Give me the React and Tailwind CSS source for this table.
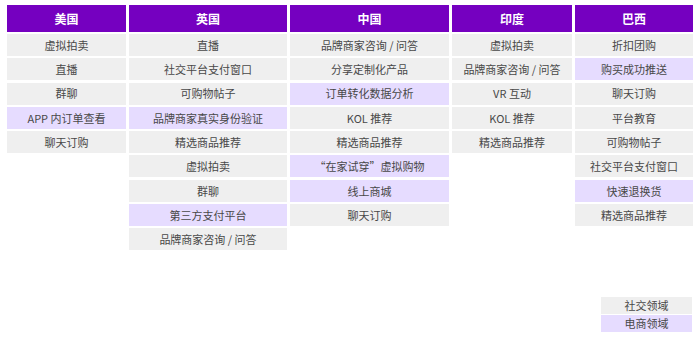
import React from "react";

// 1 = 社交领域 (gray), 2 = 电商领域 (purple)
const columns = [
  {
    name: "美国",
    width: "w-[119px]",
    items: [
      ["虚拟拍卖", 1],
      ["直播", 1],
      ["群聊", 1],
      ["APP 内订单查看", 2],
      ["聊天订购", 1],
    ],
  },
  {
    name: "英国",
    width: "w-[158px]",
    items: [
      ["直播", 1],
      ["社交平台支付窗口", 1],
      ["可购物帖子", 1],
      ["品牌商家真实身份验证", 2],
      ["精选商品推荐", 1],
      ["虚拟拍卖", 1],
      ["群聊", 1],
      ["第三方支付平台", 2],
      ["品牌商家咨询 / 问答", 1],
    ],
  },
  {
    name: "中国",
    width: "w-[159px]",
    items: [
      ["品牌商家咨询 / 问答", 1],
      ["分享定制化产品", 1],
      ["订单转化数据分析", 2],
      ["KOL 推荐", 1],
      ["精选商品推荐", 1],
      ["“在家试穿”虚拟购物", 2],
      ["线上商城", 2],
      ["聊天订购", 1],
    ],
  },
  {
    name: "印度",
    width: "w-[120px]",
    items: [
      ["虚拟拍卖", 1],
      ["品牌商家咨询 / 问答", 1],
      ["VR 互动", 1],
      ["KOL 推荐", 1],
      ["精选商品推荐", 1],
    ],
  },
  {
    name: "巴西",
    width: "w-[118px]",
    items: [
      ["折扣团购", 1],
      ["购买成功推送", 2],
      ["聊天订购", 1],
      ["平台教育", 1],
      ["可购物帖子", 1],
      ["社交平台支付窗口", 1],
      ["快速退换货", 2],
      ["精选商品推荐", 1],
    ],
  },
];

export default function App() {
  return (
    <div
      className="w-[700px] h-[338px] bg-white flex flex-col text-[#484848]"
      style={{ fontFamily: '"Noto Sans CJK SC", "Noto Sans", sans-serif' }}
    >
      <div className="flex gap-[3px] pl-[7px] pt-[5px]">
        {columns.map((col) => (
          <div key={col.name} className={`${col.width} flex flex-col`}>
            <div className="h-[27px] bg-[#7500c0] text-white font-bold text-[12px] flex items-center justify-center">
              {col.name}
            </div>
            <div className="flex flex-col gap-[2.3px] mt-[2px]">
              {col.items.map(([label, kind], i) => (
                <div
                  key={i}
                  className={`h-[22px] flex items-center justify-center text-[11px] ${
                    kind === 2 ? "bg-[#e6dcff]" : "bg-[#efefef]"
                  }`}
                >
                  {label}
                </div>
              ))}
            </div>
          </div>
        ))}
      </div>

      {/* LEGEND */}
      <div className="mt-auto mb-[6px] ml-[601px] w-[91px] flex flex-col gap-[1px] text-[11px]">
        <div className="h-[17px] bg-[#efefef] flex items-center justify-center">社交领域</div>
        <div className="h-[17px] bg-[#e6dcff] flex items-center justify-center">电商领域</div>
      </div>
    </div>
  );
}
